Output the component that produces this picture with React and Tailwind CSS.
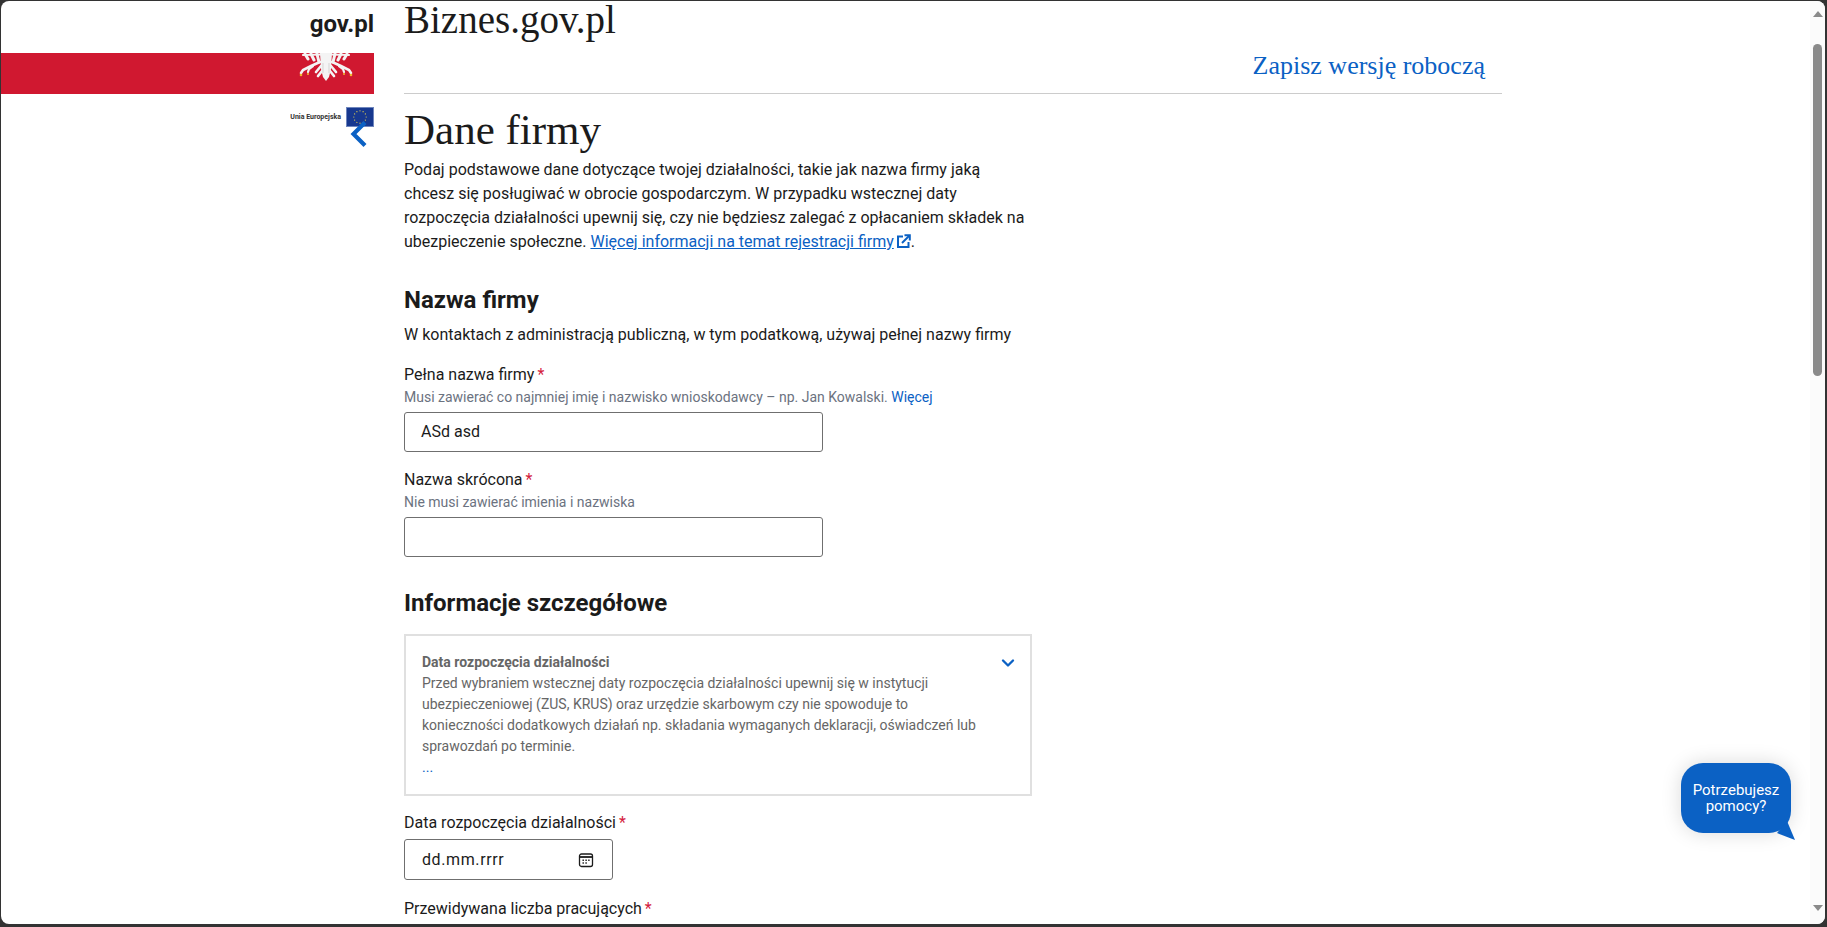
import React from 'react';
import { ChevronDown } from 'lucide-react';

function Eagle() {
  return (
    <svg width="56" height="28" viewBox="0 0 56 28" className="block">
      <g stroke="#f4f4f4" strokeLinecap="round" fill="none">
        <path d="M5 2L23 1.5M33 1.5L51 2" strokeWidth="2.2" />
        <path d="M7 1L10 6M13 1L16 7M19 1L21 9M49 1L46 6M43 1L40 7M37 1L35 9" strokeWidth="3" />
        <path d="M22 9L13 13L5 17L3 20M34 9L43 13L51 17L53 20" strokeWidth="2.6" />
        <path d="M15 13L11 16L10 19M41 13L45 16L46 19" strokeWidth="2.2" />
        <path d="M23 13L18 19M33 13L38 19M24 18L20 23M32 18L36 23" strokeWidth="2.6" />
      </g>
      <path d="M22 0h12l-1 16-2 8-3 4-3-4-2-8z" fill="#f4f4f4" />
      <path d="M25 10v10M31 10v10" stroke="#d5d5d5" strokeWidth="1" />
      <g fill="#f2b52e">
        <circle cx="3" cy="22" r="1.3" />
        <circle cx="10" cy="21" r="1.1" />
        <circle cx="46" cy="21" r="1.1" />
        <circle cx="53" cy="22" r="1.3" />
      </g>
    </svg>
  );
}

function EuFlag() {
  const stars = Array.from({ length: 12 }, (_, i) => {
    const a = (i * Math.PI) / 6;
    return [14 + 6.2 * Math.cos(a), 10 + 6.2 * Math.sin(a)];
  });
  return (
    <svg width="28" height="20" viewBox="0 0 28 20" className="block">
      <rect x="0.5" y="0.5" width="27" height="19" fill="#17388f" stroke="#6f86bd" />
      {stars.map(([x, y], i) => (
        <circle key={i} cx={x} cy={y} r="0.6" fill="#e9d44a" />
      ))}
    </svg>
  );
}

function BackChevron() {
  return (
    <svg className="absolute right-[6px] top-[13px]" width="18" height="28" viewBox="0 0 18 28">
      <path d="M15 2.5L3.5 14L15 25.5" fill="none" stroke="#0b61c4" strokeWidth="4.2" />
    </svg>
  );
}

function ExternalIcon() {
  return (
    <svg className="inline ml-[2px] mb-[2px]" width="15" height="15" viewBox="0 0 15 15" fill="none" stroke="#0b61c4" strokeWidth="2">
      <path d="M7 2.5H2v10.5h10.5V8" />
      <path d="M6 9L13 2" />
      <path d="M8.5 1.2h5.3v5.3" />
    </svg>
  );
}

function CalendarIcon() {
  return (
    <svg width="16" height="16" viewBox="0 0 16 16" fill="none" stroke="#1b1b1b" strokeWidth="1.3">
      <rect x="1.5" y="2" width="13" height="12.5" rx="2" />
      <path d="M1.5 5h13" strokeWidth="1.8" />
      <path d="M4.5 8.2h1.4M7.4 8.2h1.4M10.2 8.2h1.4M4.5 11h1.4M7.4 11h1.4" strokeWidth="1.4" />
    </svg>
  );
}

function Label({ children }) {
  return (
    <div className="text-[16px] leading-[24px] text-[#1b1b1b]">
      {children}
      <span className="text-[#d4213d] ml-[3px]">*</span>
    </div>
  );
}

function Hint({ children }) {
  return <div className="text-[14px] leading-[20px] text-[#6b7280]">{children}</div>;
}

function TextInput({ value }) {
  return (
    <div className="w-[419px] h-[40px] mt-[5px] border border-[#6f6f6f] rounded-[3px] px-[16px] flex items-center text-[16px] text-[#1b1b1b]">
      {value}
    </div>
  );
}

export default function App() {
  return (
    <div className="h-[927px] w-[1827px] bg-[#333333] pt-px pl-px pr-[2px] pb-[3px] overflow-hidden font-['Roboto',sans-serif]">
      <div className="relative h-full bg-white rounded-[8px] overflow-hidden flex">
        {/* left column */}
        <aside className="w-[373px] shrink-0">
          <div className="h-[52px] flex justify-end items-start pt-[7px]">
            <span className="text-[24px] leading-[32px] font-bold text-[#1b1b1b]">gov.pl</span>
          </div>
          <div className="h-[41px] bg-[#d01830] flex justify-end pr-[20px] overflow-hidden">
            <Eagle />
          </div>
          <div className="relative mt-[13px] flex justify-end items-center gap-[5px]">
            <span className="text-[7px] font-bold text-[#333333]">Unia Europejska</span>
            <EuFlag />
            <BackChevron />
          </div>
        </aside>

        {/* main column */}
        <main className="w-[1098px] ml-[30px] shrink-0">
          <h2 className="h-[40px] font-['Liberation_Serif',serif] text-[39px] leading-[38px] text-[#1b1b1b]">Biznes.gov.pl</h2>
          <div className="h-[53px] border-b border-[#cccccc] flex justify-end pr-[17px] pt-[7px]">
            <a className="font-['Liberation_Serif',serif] text-[26px] leading-[36px] text-[#0b61c4]">Zapisz wersję roboczą</a>
          </div>

          <h1 className="font-['Liberation_Serif',serif] text-[43px] leading-[50px] mt-[11px] text-[#1b1b1b]">Dane firmy</h1>
          <p className="w-[628px] text-[16px] leading-[24px] text-[#1b1b1b] mt-[3px]">
            Podaj podstawowe dane dotyczące twojej działalności, takie jak nazwa firmy jaką chcesz się posługiwać w obrocie gospodarczym. W przypadku wstecznej daty rozpoczęcia działalności upewnij się, czy nie będziesz zalegać z opłacaniem składek na ubezpieczenie społeczne.{' '}
            <a className="text-[#0b61c4] underline">Więcej informacji na temat rejestracji firmy</a>
            <ExternalIcon />.
          </p>

          <h3 className="text-[24px] leading-[32px] font-bold text-[#1b1b1b] mt-[30px]">Nazwa firmy</h3>
          <p className="text-[16px] leading-[24px] text-[#1b1b1b] mt-[7px]">W kontaktach z administracją publiczną, w tym podatkową, używaj pełnej nazwy firmy</p>

          <div className="mt-[16px]">
            <Label>Pełna nazwa firmy</Label>
            <Hint>
              Musi zawierać co najmniej imię i nazwisko wnioskodawcy – np. Jan Kowalski. <a className="text-[#0b61c4]">Więcej</a>
            </Hint>
            <TextInput value="ASd asd" />
          </div>

          <div className="mt-[16px]">
            <Label>Nazwa skrócona</Label>
            <Hint>Nie musi zawierać imienia i nazwiska</Hint>
            <TextInput value="" />
          </div>

          <h3 className="text-[24px] leading-[32px] font-bold text-[#1b1b1b] mt-[30px]">Informacje szczegółowe</h3>

          <section className="w-[628px] h-[162px] mt-[15px] border-2 border-[#e0e0e0] px-[16px] pt-[16px] flex items-start justify-between">
            <div className="w-[560px] text-[14px] leading-[21px] text-[#666666]">
              <div className="font-bold">Data rozpoczęcia działalności</div>
              <div>Przed wybraniem wstecznej daty rozpoczęcia działalności upewnij się w instytucji ubezpieczeniowej (ZUS, KRUS) oraz urzędzie skarbowym czy nie spowoduje to konieczności dodatkowych działań np. składania wymaganych deklaracji, oświadczeń lub sprawozdań po terminie.</div>
              <div className="text-[#0b61c4]">...</div>
            </div>
            <ChevronDown className="text-[#0b61c4] mt-[1px] mr-[-4px]" size={20} strokeWidth={2.8} />
          </section>

          <div className="mt-[15px]">
            <Label>Data rozpoczęcia działalności</Label>
            <div className="w-[209px] h-[41px] mt-[4px] border border-[#6f6f6f] rounded-[3px] pl-[17px] pr-[18px] flex items-center justify-between text-[16px] tracking-[0.6px] text-[#1b1b1b]">
              dd.mm.rrrr
              <CalendarIcon />
            </div>
          </div>

          <div className="mt-[17px]">
            <Label>Przewidywana liczba pracujących</Label>
          </div>
        </main>

        {/* help bubble */}
        <div className="absolute left-[1680px] top-[762px] w-[110px] h-[70px] bg-[#0b61c4] rounded-[22px] shadow-[0_0_20px_rgba(0,0,0,0.15)] flex items-center justify-center text-center text-[15px] leading-[16px] font-normal text-white">
          <span>Potrzebujesz<br />pomocy?</span>
          <svg className="absolute left-[94px] top-[54px]" width="24" height="26" viewBox="0 0 24 26">
            <path d="M12 4 L20 23 L2 16z" fill="#0b61c4" />
          </svg>
        </div>

        {/* scrollbar */}
        <div className="absolute right-0 top-0 bottom-0 w-[15px] bg-[#fbfbfb] flex flex-col items-center">
          <svg className="mt-[10px]" width="10" height="6" viewBox="0 0 10 6"><path d="M5 0l5 6H0z" fill="#8a8a8a" /></svg>
          <div className="w-[9px] h-[332px] mt-[27px] rounded-full bg-[#8a8a8a]" />
          <svg className="mt-auto mb-[13px]" width="10" height="6" viewBox="0 0 10 6"><path d="M0 0h10L5 6z" fill="#8a8a8a" /></svg>
        </div>
      </div>
    </div>
  );
}
